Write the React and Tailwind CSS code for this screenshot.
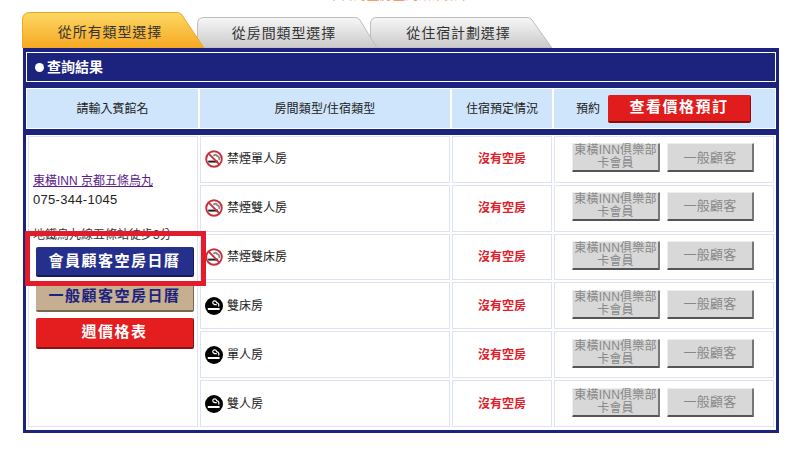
import React from 'react';

const rooms = [
  { name: '禁煙單人房', smoking: false },
  { name: '禁煙雙人房', smoking: false },
  { name: '禁煙雙床房', smoking: false },
  { name: '雙床房', smoking: true },
  { name: '單人房', smoking: true },
  { name: '雙人房', smoking: true },
];

const Tab = ({ label, className, w, h, d, fill, stroke }) => (
  <div className={`relative flex justify-center ${className}`}>
    <svg className="absolute inset-0" width={w} height={h} viewBox={`0 0 ${w} ${h}`}>
      <defs>
        <linearGradient id="tabOn" x1="0" y1="0" x2="0" y2="1">
          <stop offset="0" stopColor="#fcd863" />
          <stop offset="1" stopColor="#f7a823" />
        </linearGradient>
        <linearGradient id="tabOff" x1="0" y1="0" x2="0" y2="1">
          <stop offset="0" stopColor="#f7f7f7" />
          <stop offset="1" stopColor="#c9c9c9" />
        </linearGradient>
      </defs>
      <path d={d} fill={fill} stroke={stroke} />
    </svg>
    <span className="relative text-[14px] leading-[20px] tracking-[0.9px] text-[#333]">{label}</span>
  </div>
);

const NoSmokingIcon = () => (
  <svg width="18" height="18" viewBox="0 0 18 18" className="shrink-0">
    <circle cx="9" cy="9" r="7.8" fill="#fff" stroke="#c6323c" strokeWidth="1.9" />
    <path d="M3.2 10.6 H13 V12.6 H3.2 Z" fill="#222" />
    <path d="M8.5 6 C9.5 4.2 12 4.4 12.2 6.2 C13.9 6.4 14.8 8 14 9.8" fill="none" stroke="#888" strokeWidth="1.8" />
    <path d="M3.6 3.6 L14.4 14.4" stroke="#c6323c" strokeWidth="1.9" />
  </svg>
);

const SmokingIcon = () => (
  <svg width="18" height="18" viewBox="0 0 18 18" className="shrink-0">
    <circle cx="9" cy="9" r="9" fill="#000" />
    <path d="M2.8 11 H14.6 V13 H2.8 Z" fill="#fff" />
    <path d="M7.6 5.4 C8.4 3.4 11.2 3.2 11.6 5.6 C13.4 5.8 14.4 7.4 13.6 9.6 M7.6 5.4 C8 7.4 10 8 11.8 7.6" fill="none" stroke="#fff" strokeWidth="1.2" />
  </svg>
);

const BigButton = ({ className, children }) => (
  <div className={`rounded-[2px] flex items-center justify-center text-[15px] font-bold tracking-[1.5px] border-b-2 border-r border-[#00000066] ${className}`}>
    {children}
  </div>
);

const GreyButton = ({ className, children }) => (
  <div className={`h-[29px] bg-[#d8d8d8] rounded-[1px] border-b-2 border-r-2 border-t border-l border-b-[#555] border-r-[#777] border-t-[#eee] border-l-[#eee] flex items-center justify-center text-center text-[#888] ${className}`}>
    {children}
  </div>
);

const App = () => {
  return (
    <div className="relative w-[791px] h-[449px] bg-white overflow-hidden font-['Liberation_Sans','Noto_Sans_CJK_TC',sans-serif]">
      {/* clipped line at the very top */}
      <div className="h-[12px] overflow-hidden">
        <div className="-mt-[12px] pl-[7px] text-center text-[13px] leading-[14px] text-[#f0a070]">
          本日的空房查詢結果如下
        </div>
      </div>

      {/* Tabs */}
      <div className="flex items-end ml-[22px] h-[36px]">
        <Tab
          label="從所有類型選擇"
          className="z-30 w-[182px] h-[36px] pt-[10px] pr-[6px]"
          w={182}
          h={36}
          d="M0.5 36 V8 Q0.5 0.5 8 0.5 H155 Q158 0.5 160 3 L182 36 Z"
          fill="url(#tabOn)"
          stroke="#eba821"
        />
        <Tab
          label="從房間類型選擇"
          className="z-20 -ml-[7px] w-[180px] h-[31px] pt-[6px] pr-[6px]"
          w={180}
          h={31}
          d="M0.5 31 V7 Q0.5 0.5 7 0.5 H158 Q161 0.5 163 3 L180 31 Z"
          fill="url(#tabOff)"
          stroke="#bdbdbd"
        />
        <Tab
          label="從住宿計劃選擇"
          className="z-10 -ml-[7px] w-[182px] h-[31px] pt-[6px] pr-[5px]"
          w={182}
          h={31}
          d="M0.5 31 V7 Q0.5 0.5 7 0.5 H157 Q160 0.5 162 3 L182 31 Z"
          fill="url(#tabOff)"
          stroke="#bdbdbd"
        />
      </div>

      {/* Result box */}
      <div className="ml-[23px] w-[756px] h-[385px] border-[3px] border-[#1c237f] bg-[#1c237f] flex flex-col">
        <div className="mt-[1px] h-[30px] border border-white flex items-center pl-[8px] text-white text-[14px] font-bold">
          <span className="w-[9px] h-[9px] rounded-full bg-white mr-[3px]" />
          <span>查詢結果</span>
        </div>

        <div className="mt-[6px] h-[41px] p-[1px] grid grid-cols-[171px_250px_100px_1fr] gap-x-[2px] bg-white text-[12px] text-[#222]">
          <div className="bg-[#cfe5fb] flex items-center justify-center">請輸入賓館名</div>
          <div className="bg-[#cfe5fb] flex items-center justify-center tracking-[0.2px]">房間類型/住宿類型</div>
          <div className="bg-[#cfe5fb] flex items-center justify-center">住宿預定情況</div>
          <div className="bg-[#cfe5fb] flex items-center pl-[22px] gap-[8px]">
            預約
            <BigButton className="w-[143px] h-[28px] bg-[#e01c1c] text-white">查看價格預訂</BigButton>
          </div>
        </div>

        <div className="mt-[6px] flex-1 bg-white pl-[2px] pr-[2px] pt-[1px] pb-[3px] grid grid-cols-[170px_250px_100px_1fr] grid-rows-6 gap-[2px]">
          <div className="row-span-6 border border-[#dfe2f3] pl-[4px] pt-[35px] text-[12px]">
            <a className="block text-[#5b1a8b] underline leading-[18px]">東橫INN 京都五條烏丸</a>
            <div className="text-[13px] leading-[18px] text-[#222] mt-[1px] tracking-[0.3px]">075-344-1045</div>
            <div className="mt-[18px] leading-[16px] text-[#333] whitespace-nowrap">地鐵烏丸線五條站徒步3分</div>
            <div className="mt-[4px] ml-[3px] w-[158px] flex flex-col gap-[5px]">
              <BigButton className="h-[30px] bg-[#25308c] text-white">會員顧客空房日曆</BigButton>
              <BigButton className="h-[30px] bg-[#c6ae90] text-[#1c237f]">一般顧客空房日曆</BigButton>
              <BigButton className="h-[31px] mt-[1px] bg-[#e41e1e] text-white">週價格表</BigButton>
            </div>
          </div>

          {rooms.map((r) => (
            <React.Fragment key={r.name}>
              <div className="border border-[#dfe2f3] flex items-center pl-[4px] gap-[4px] text-[12px] text-[#222]">
                {r.smoking ? <SmokingIcon /> : <NoSmokingIcon />}
                {r.name}
              </div>
              <div className="border border-[#dfe2f3] flex items-center justify-center text-[12px] font-bold text-[#e0202a]">
                沒有空房
              </div>
              <div className="border border-[#dfe2f3] flex items-center pl-[17px] pb-[3px] gap-[7px]">
                <GreyButton className="w-[88px] text-[12px] leading-[13px] tracking-[0.2px]">東橫INN俱樂部<br />卡會員</GreyButton>
                <GreyButton className="w-[87px] text-[13px] tracking-[0.3px]">一般顧客</GreyButton>
              </div>
            </React.Fragment>
          ))}
        </div>
      </div>

      {/* red highlight drawn over the page */}
      <div className="absolute left-[25px] top-[231px] w-[181px] h-[55px] border-[5px] border-[#e21c2a]" />
    </div>
  );
};

export default App;
